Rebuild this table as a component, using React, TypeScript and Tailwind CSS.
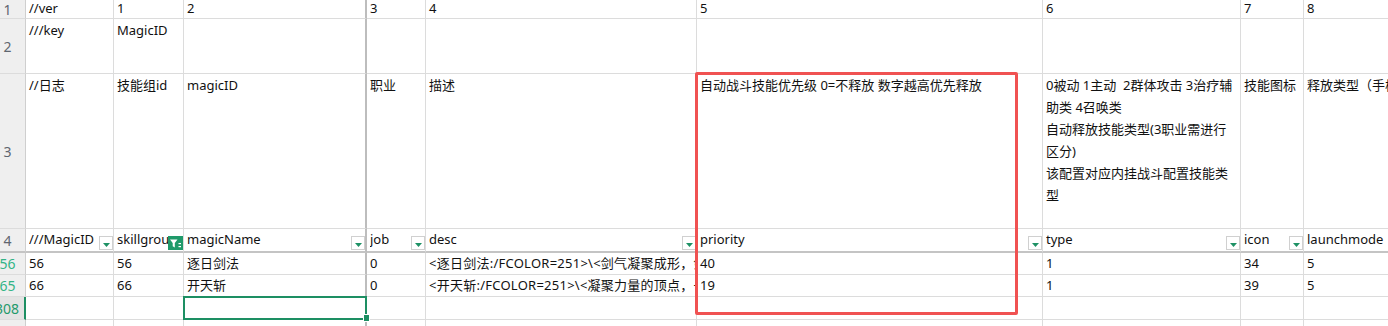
import React from 'react';

const FONT = "font-['Noto_Sans','Noto_Sans_CJK_SC',sans-serif]";

// widths incl. right grid line: header, A..I
const COLS = 'grid-cols-[26px_88px_70px_183px_59px_271px_346px_198px_63px_120px]';
const ROWS = 'grid-rows-[19px_55px_155px_24px_22px_22px_23px_23px]';

const FREEZE_COL = 3; // column C carries the frozen-pane line
const DESC_COL = 5;

type CellProps = {
  col: number;
  children?: React.ReactNode;
  head?: boolean;
  top?: boolean;
  className?: string;
};

const Cell: React.FC<CellProps> = ({ col, children, head, top, className = '' }) => {
  const right = col === FREEZE_COL ? 'border-r-2 border-r-[#bdbdbd]' : 'border-r border-r-[#dcdcdc]';
  const bottom = head ? 'border-b-2 border-b-[#c4c4c4]' : 'border-b border-b-[#dcdcdc]';
  const align = top ? 'leading-[22px]' : 'flex items-center';
  return (
    <div
      className={`min-w-0 overflow-hidden whitespace-nowrap bg-white pl-[3px] text-[13px] text-[#111] ${right} ${bottom} ${align} ${className}`}
    >
      {children}
    </div>
  );
};

type RowHeadProps = { n: string; tone?: 'gray' | 'green' | 'active'; head?: boolean; selected?: boolean };

const RowHead: React.FC<RowHeadProps> = ({ n, tone = 'gray', head, selected }) => {
  const color = tone === 'gray' ? 'text-[#5f6670]' : tone === 'green' ? 'text-[#33b486]' : 'text-[#1f9a6b]';
  const right = selected ? 'border-r-2 border-r-[#1d8f63] bg-[#e3e3e3]' : 'border-r border-r-[#cfcfcf] bg-[#efefef]';
  const bottom = head ? 'border-b-2 border-b-[#c4c4c4]' : 'border-b border-b-[#dcdcdc]';
  return (
    <div
      className={`flex items-center justify-center overflow-hidden whitespace-nowrap pr-[10px] text-[14px] ${color} ${right} ${bottom}`}
    >
      {n}
    </div>
  );
};

const Dropdown: React.FC = () => (
  <div className="mb-[1px] flex h-[14px] w-[14px] shrink-0 items-center justify-center border border-[#d0d0d0] bg-white pt-[3px]">
    <svg width="7" height="4" viewBox="0 0 7 4">
      <path d="M0 0h7L3.5 4z" fill="#1e9165" />
    </svg>
  </div>
);

const FilterOn: React.FC = () => (
  <div className="mb-[1px] flex h-[14px] w-[15px] shrink-0 items-center justify-center bg-[#1f9a6a]">
    <svg width="13" height="11" viewBox="0 0 13 11">
      <path d="M1 1.5h7.5L5.8 5v4.5L3.7 8.3V5z" fill="#fff" />
      <rect x="9.5" y="5" width="2.5" height="1.2" fill="#fff" />
      <rect x="9.5" y="8" width="2.5" height="1.2" fill="#fff" />
    </svg>
  </div>
);

const HeadCell: React.FC<{ col: number; label: string; filter?: 'none' | 'dd' | 'on' }> = ({
  col,
  label,
  filter = 'dd',
}) => (
  <Cell col={col} head className="!items-end">
    <span className="min-w-0 flex-1 self-center overflow-hidden">{label}</span>
    {filter === 'dd' && <Dropdown />}
    {filter === 'on' && <FilterOn />}
  </Cell>
);

const row1 = ['//ver', '1', '2', '3', '4', '5', '6', '7', '8'];
const row2 = ['///key', 'MagicID', '', '', '', '', '', '', ''];

const row3 = ['//日志', '技能组id', 'magicID', '职业', '描述', '自动战斗技能优先级 0=不释放 数字越高优先释放'];
const typeNote = [
  '0被动 1主动  2群体攻击 3治疗辅',
  '助类 4召唤类',
  '自动释放技能类型(3职业需进行',
  '区分)',
  '该配置对应内挂战斗配置技能类',
  '型',
];

const heads: { label: string; filter: 'dd' | 'on' }[] = [
  { label: '///MagicID', filter: 'dd' },
  { label: 'skillgroup', filter: 'on' },
  { label: 'magicName', filter: 'dd' },
  { label: 'job', filter: 'dd' },
  { label: 'desc', filter: 'dd' },
  { label: 'priority', filter: 'dd' },
  { label: 'type', filter: 'dd' },
  { label: 'icon', filter: 'dd' },
  { label: 'launchmode', filter: 'dd' },
];

const data: { n: string; cells: string[] }[] = [
  {
    n: '56',
    cells: ['56', '56', '逐日剑法', '0', '<逐日剑法:/FCOLOR=251>\\<剑气凝聚成形，剑气纵横三万里', '40', '1', '34', '5'],
  },
  {
    n: '65',
    cells: ['66', '66', '开天斩', '0', '<开天斩:/FCOLOR=251>\\<凝聚力量的顶点，一击开天', '19', '1', '39', '5'],
  },
];

export default function App() {
  return (
    <div className={`h-[326px] w-[1388px] overflow-hidden bg-white ${FONT}`}>
      <div className={`relative grid ${COLS} ${ROWS}`}>
        {/* row 1 */}
        <RowHead n="1" />
        {row1.map((v, i) => (
          <Cell key={`r1-${i}`} col={i + 1}>
            {v}
          </Cell>
        ))}

        {/* row 2 */}
        <RowHead n="2" />
        {row2.map((v, i) => (
          <Cell key={`r2-${i}`} col={i + 1} top>
            {v}
          </Cell>
        ))}

        {/* row 3 */}
        <RowHead n="3" />
        {row3.map((v, i) => (
          <Cell key={`r3-${i}`} col={i + 1} top>
            {v}
          </Cell>
        ))}
        <Cell col={7} top>
          {typeNote.map((line) => (
            <div key={line} className="whitespace-pre">
              {line}
            </div>
          ))}
        </Cell>
        <Cell col={8} top>
          技能图标
        </Cell>
        <Cell col={9} top>
          释放类型（手柄/自动）
        </Cell>

        {/* row 4: header row with filters */}
        <RowHead n="4" head />
        {heads.map((h, i) => (
          <HeadCell key={h.label} col={i + 1} label={h.label} filter={h.filter} />
        ))}

        {/* filtered data rows */}
        {data.map((r) => (
          <React.Fragment key={r.n}>
            <RowHead n={r.n} tone="green" />
            {r.cells.map((v, i) => (
              <Cell key={`${r.n}-${i}`} col={i + 1} className={i + 1 === DESC_COL ? 'tracking-[0.25px]' : ''}>
                {v}
              </Cell>
            ))}
          </React.Fragment>
        ))}

        {/* row 308, selected */}
        <RowHead n="308" tone="active" selected />
        {Array.from({ length: 9 }).map((_, i) => (
          <Cell key={`r308-${i}`} col={i + 1} />
        ))}

        {/* next row, mostly off screen */}
        <RowHead n="309" />
        {Array.from({ length: 9 }).map((_, i) => (
          <Cell key={`r309-${i}`} col={i + 1} />
        ))}

        {/* active cell outline + fill handle */}
        <div className="pointer-events-none absolute left-[183px] top-[296px] h-[24px] w-[184px] border-2 border-[#1d8f63]" />
        <div className="pointer-events-none absolute left-[364px] top-[315px] h-[6px] w-[5px] bg-[#1d8f63] outline outline-1 outline-white" />

        {/* red annotation box */}
        <div className="pointer-events-none absolute left-[695px] top-[72px] h-[243px] w-[323px] rounded-[2px] border-[3px] border-[#f05252]" />
      </div>
    </div>
  );
}
